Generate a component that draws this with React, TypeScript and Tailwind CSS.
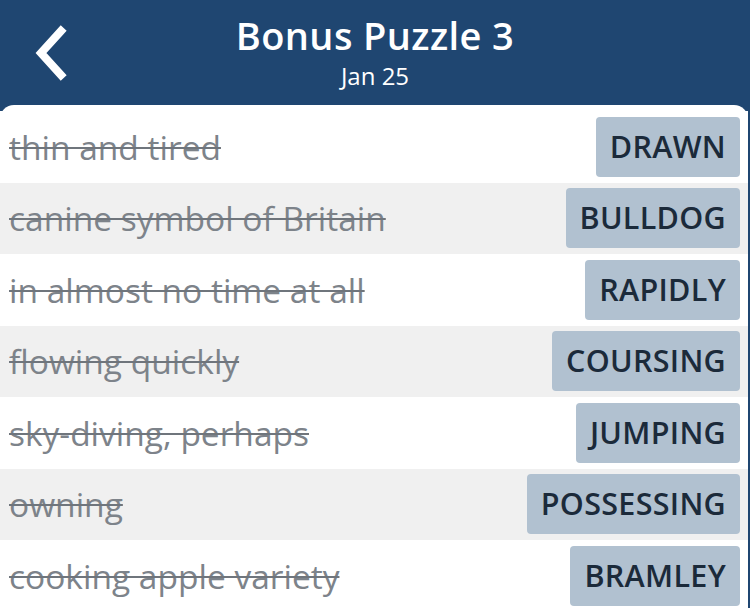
import React from 'react'

const clues = [
  { clue: 'thin and tired', answer: 'DRAWN' },
  { clue: 'canine symbol of Britain', answer: 'BULLDOG' },
  { clue: 'in almost no time at all', answer: 'RAPIDLY' },
  { clue: 'flowing quickly', answer: 'COURSING' },
  { clue: 'sky-diving, perhaps', answer: 'JUMPING' },
  { clue: 'owning', answer: 'POSSESSING' },
  { clue: 'cooking apple variety', answer: 'BRAMLEY' },
]

function BackChevron() {
  return (
    <svg width="40" height="56" viewBox="0 0 40 56" fill="none">
      <path d="M30 6 L10 28 L30 50" stroke="white" strokeWidth="8" strokeLinecap="square" strokeLinejoin="miter" />
    </svg>
  )
}

export default function App() {
  return (
    <div
      className="w-[750px] h-[608px] overflow-hidden bg-[#1f4671]"
      style={{ fontFamily: '"Open Sans", "Noto Sans", sans-serif' }}
    >
      {/* Header */}
      <div className="relative h-[105px] flex flex-col items-center">
        <button className="absolute left-[31px] top-[25px]">
          <BackChevron />
        </button>
        <h1 className="mt-[12px] text-[38px] leading-[46px] font-semibold text-white tracking-[0.4px]">Bonus Puzzle 3</h1>
        <div className="mt-[3px] text-[24px] leading-[30px] text-white">Jan 25</div>
      </div>

      {/* Clue list */}
      <div className="mr-[2px] h-[503px] bg-white rounded-t-[14px] pt-[6px]">
        {clues.map((c, i) => (
          <div
            key={c.answer}
            className={`flex items-center justify-between h-[71.5px] pl-[9px] pr-[8px] ${i % 2 === 1 ? 'bg-[#f0f0f0]' : 'bg-white'}`}
          >
            <span className="text-[33.5px] text-[#7d838a] line-through decoration-[2px] decoration-[#6f757c]">
              {c.clue}
            </span>
            <span className="h-[60px] flex items-center px-[14px] rounded-[4px] bg-[#b1c1d0] text-[30.5px] font-semibold text-[#1b2a3a] tracking-[0.3px]">
              {c.answer}
            </span>
          </div>
        ))}
      </div>
    </div>
  )
}
